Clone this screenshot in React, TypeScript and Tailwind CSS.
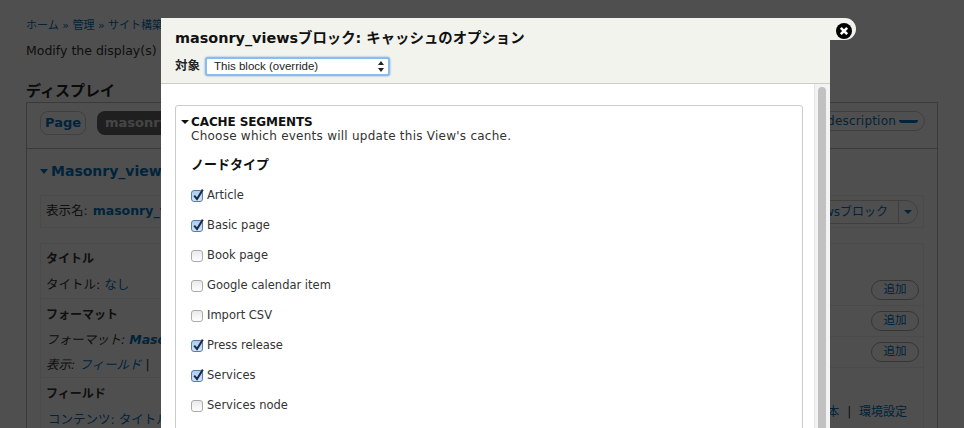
import React from "react";

const Check: React.FC<{ on: boolean; label: string }> = ({ on, label }) => (
  <div className="flex items-center h-[30px] text-[11.5px] text-[#333]">
    <span
      className={`relative w-[12px] h-[12px] rounded-[3px] border mr-[4px] shrink-0 ${
        on
          ? "border-[#5b7ba8] bg-gradient-to-b from-[#a9cdf3] to-[#cfe6fb]"
          : "border-[#aaa] bg-gradient-to-b from-[#e9e9e9] to-[#fff]"
      }`}
    >
      {on && (
        <svg className="absolute left-[0px] top-[-3px]" width="13" height="14" viewBox="0 0 13 14">
          <path d="M2.2 7.6 L5 11 L10.8 1.6" fill="none" stroke="#1d2a44" strokeWidth="2" />
        </svg>
      )}
    </span>
    {label}
  </div>
);

const AddRow = () => (
  <div className="h-[31px] border-b border-[#eee] flex items-center justify-end pr-[4px]">
    <button className="w-[48px] h-[20px] rounded-full border border-[#aaa] text-[11.5px] text-[#0074bd]">追加</button>
  </div>
);

const Background = () => (
  <div className="pt-[18px] px-[26px] text-[12px] text-[#333] h-[428px]">
    <div className="h-[16px] leading-[16px] text-[#0074bd] text-[11px]">ホーム » 管理 » サイト構築 » Views</div>
    <p className="mt-[9px] text-[12.5px] leading-[16px]">Modify the display(s) of your view below or add new displays.</p>
    <h2 className="mt-[22px] text-[15px] leading-[20px] font-bold text-[#222]">ディスプレイ</h2>
    <div className="mt-[1px] w-[912px] h-[400px] border border-[#bbb]">
      <div className="h-[46px] border-b border-[#bbb] flex items-start justify-between pl-[13px] pr-[12px] pt-[8px]">
        <div className="flex gap-[11px]">
          <span className="h-[24px] w-[46px] rounded-[8px] border border-[#ccc] flex items-center justify-center font-bold text-[#0074bd] text-[13px]">Page</span>
          <span className="h-[24px] w-[200px] rounded-[8px] bg-[#666] text-[#ddd] flex items-center px-[8px] font-bold text-[13px]">masonry_views</span>
        </div>
        <span className="h-[20px] rounded-full border border-[#ccc] flex items-center pl-[10px] pr-[6px] text-[#0074bd] text-[12px] tracking-[0.2px]">
          edit view name/description
          <span className="ml-[3px] w-[19px] h-[3px] rounded-b-full bg-[#0074bd]" />
        </span>
      </div>
      <div className="px-[13px]">
        <div className="mt-[12px] h-[20px] flex items-center font-bold text-[14px] text-[#0074bd]">
          <span className="mr-[3px] border-x-[4px] border-x-transparent border-t-[5px] border-t-[#0074bd]" />
          Masonry_views
        </div>
        <div className="mt-[14px] h-[33px] w-[884px] border border-[#eee] flex items-center justify-between pl-[5px] pr-[5px]">
          <span className="text-[12.5px]">
            表示名: <span className="ml-[1px] text-[#0074bd] font-semibold">masonry_views</span>
          </span>
          <span className="h-[24px] rounded-full border border-[#ccc] flex items-center pl-[8px] text-[#0074bd] text-[12px]">
            masonry_viewsブロック
            <span className="ml-[10px] h-[22px] w-[19px] border-l border-[#ccc] flex items-center justify-center">
              <span className="border-x-[4px] border-x-transparent border-t-[4px] border-t-[#0074bd]" />
            </span>
          </span>
        </div>
        <div className="mt-[15px] w-[884px] border-t border-x border-[#eee] flex text-[12.5px]">
          <div className="w-[300px]">
            <div className="h-[55px] pl-[5px] pt-[6px] border-b border-[#eee]">
              <div className="font-bold text-[12px] leading-[18px]">タイトル</div>
              <div className="mt-[9px] leading-[16px]">
                タイトル: <span className="text-[#0074bd]">なし</span>
              </div>
            </div>
            <div className="h-[79px] pl-[5px] pt-[7px] border-b border-[#eee]">
              <div className="font-bold text-[12px] leading-[18px]">フォーマット</div>
              <div className="mt-[8px] leading-[16px] italic">
                フォーマット: <span className="text-[#0074bd] font-bold">Masonry</span>
              </div>
              <div className="mt-[9px] leading-[16px] italic">
                表示: <span className="text-[#0074bd]">フィールド</span> |
              </div>
            </div>
            <div className="pl-[5px] pt-[7px]">
              <div className="font-bold text-[12px] leading-[18px]">フィールド</div>
              <div className="mt-[9px] leading-[16px] text-[#0074bd] pl-[2px]">コンテンツ: タイトル</div>
            </div>
          </div>
          <div className="flex-1 pl-[400px]">
            <div className="h-[31px]" />
            <AddRow />
            <AddRow />
            <AddRow />
            <div className="mt-[36px] text-right pr-[16px] leading-[16px] text-[#0074bd] text-[12px]">
              基本 <span className="text-[#333] mx-[4px]">|</span> 環境設定
            </div>
          </div>
        </div>
      </div>
    </div>
  </div>
);

const Modal = () => (
  <div className="absolute left-[161px] top-[18px] w-[669px] h-[410px] bg-white flex flex-col">
    <div className="h-[66px] shrink-0 bg-[#f3f3ee] border-b border-[#ccc] px-[14px] pt-[10px]">
      <h1 className="text-[14.4px] leading-[20px] font-bold text-[#111]">masonry_viewsブロック: キャッシュのオプション</h1>
      <div className="mt-[9px] flex items-center h-[19px]">
        <label className="text-[12.5px] font-bold text-[#222] mr-[5px]">対象</label>
        <div className="w-[185px] h-[19px] rounded-[3px] bg-white border-2 border-[#8dbbec] shadow-[0_0_2px_#5b9fe8] flex items-center justify-between pl-[7px] pr-[4px] text-[11.5px] text-[#222] font-['Liberation_Sans',sans-serif]">
          This block (override)
          <svg width="6" height="11" viewBox="0 0 6 11">
            <path d="M3 0 L6 4 L0 4 Z M3 11 L0 7 L6 7 Z" fill="#222" />
          </svg>
        </div>
      </div>
    </div>
    <div className="flex-1 flex min-h-0">
      <div className="flex-1 px-[14px] pt-[21px] overflow-hidden">
        <fieldset className="w-[628px] h-[400px] border border-[#ccc] rounded-[3px] pl-[15px] pt-[9px]">
          <div className="relative text-[12px] font-bold leading-[14px] text-[#111] uppercase tracking-[-0.1px]">
            <span className="absolute left-[-10px] top-[5px] border-x-[4px] border-x-transparent border-t-[4px] border-t-[#111]" />
            Cache segments
          </div>
          <div className="text-[12px] leading-[14px] text-[#333] tracking-[0.25px]">Choose which events will update this View's cache.</div>
          <div className="mt-[14px] text-[13px] leading-[16px] font-bold text-[#111]">ノードタイプ</div>
          <div className="mt-[8px]">
            <Check on label="Article" />
            <Check on label="Basic page" />
            <Check on={false} label="Book page" />
            <Check on={false} label="Google calendar item" />
            <Check on={false} label="Import CSV" />
            <Check on label="Press release" />
            <Check on label="Services" />
            <Check on={false} label="Services node" />
          </div>
        </fieldset>
      </div>
      <div className="w-[16px] shrink-0 bg-[#f3f3f3] border-l border-[#e5e5e5] pt-[3px] pl-[3px]">
        <div className="w-[8px] h-[400px] rounded-t-[4px] bg-[#c1c1c1]" />
      </div>
    </div>
  </div>
);

const CloseTab = () => (
  <div className="absolute left-[830px] top-[18px] w-[26px] h-[22px] bg-[#f3f3ee] rounded-r-[11px] flex items-center pl-[6px] pt-[3px]">
    <svg width="16" height="16" viewBox="0 0 16 16">
      <circle cx="8" cy="8" r="8" fill="#000" />
      <path d="M4.8 4.8 L11.2 11.2 M11.2 4.8 L4.8 11.2" stroke="#fff" strokeWidth="2.6" />
    </svg>
  </div>
);

export default function App() {
  return (
    <div className="relative w-[964px] h-[428px] overflow-hidden bg-white font-['DejaVu_Sans','Noto_Sans_CJK_JP',sans-serif]">
      <Background />
      <div className="absolute inset-0 bg-black/[0.69]" />
      <Modal />
      <CloseTab />
    </div>
  );
}
